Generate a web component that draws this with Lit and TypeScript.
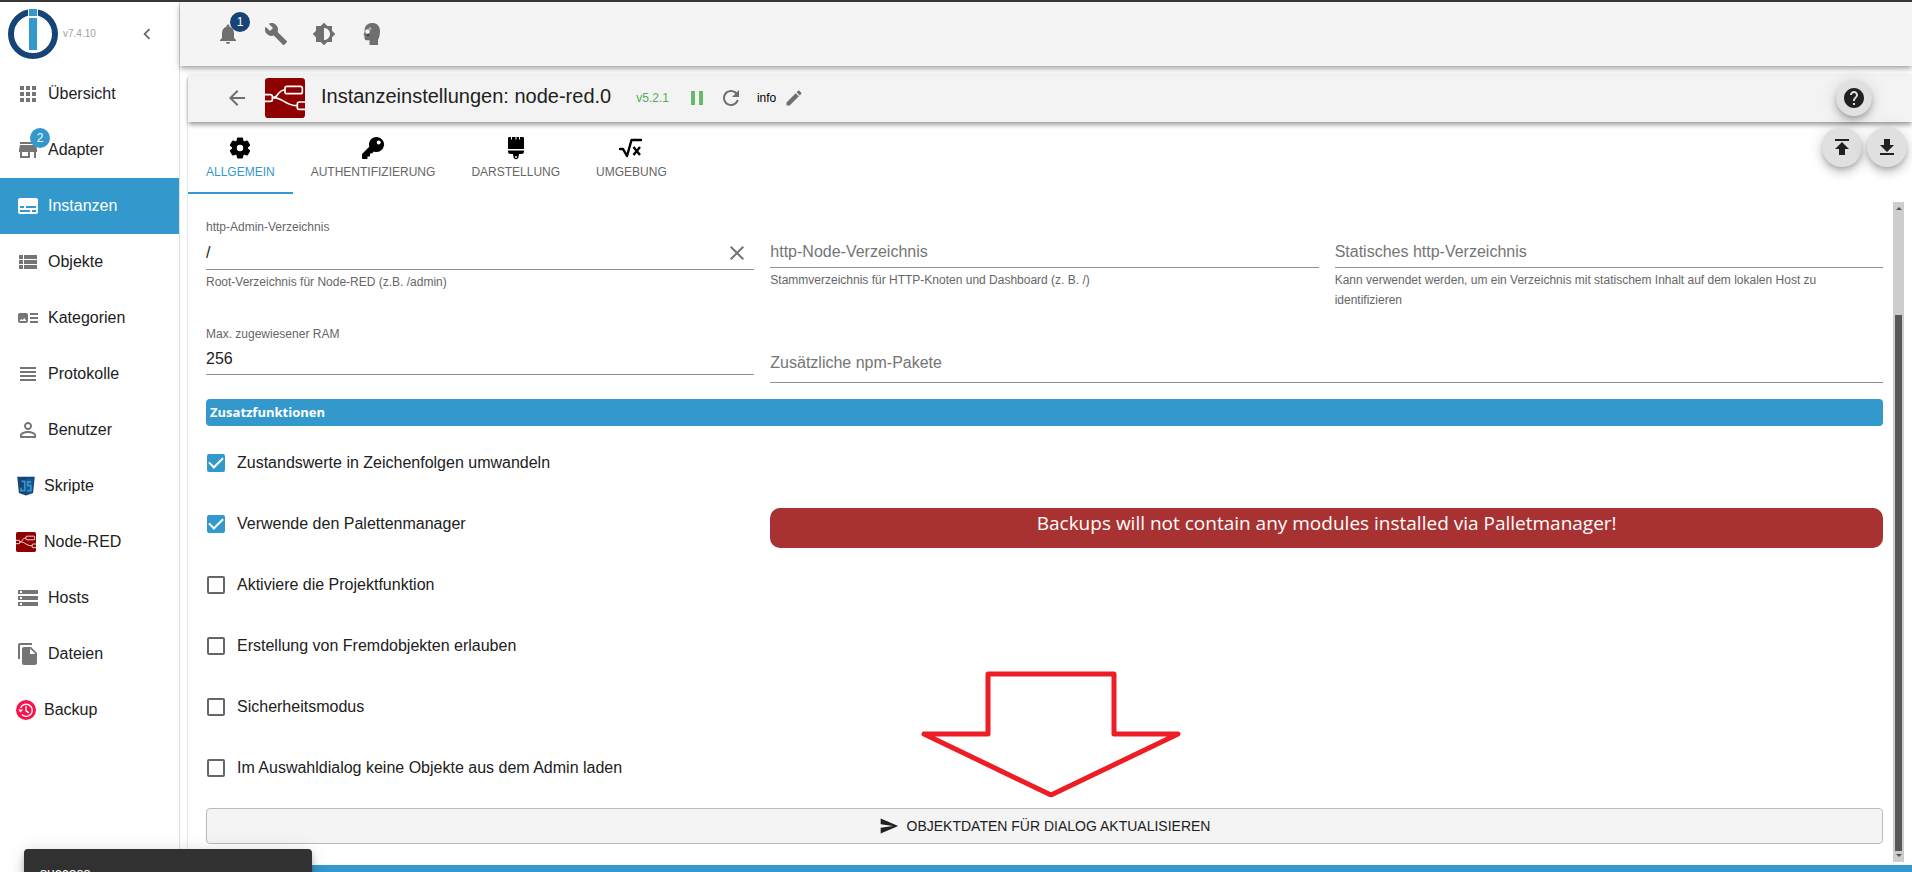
import { LitElement, html, css, svg, nothing, TemplateResult } from "lit";
import { customElement, state } from "lit/decorators.js";

const shapes: Record<string, TemplateResult> = {
  apps: svg`<path d="M4 8h4V4H4v4zm6 12h4v-4h-4v4zm-6 0h4v-4H4v4zm0-6h4v-4H4v4zm6 0h4v-4h-4v4zm6-10v4h4V4h-4zm-6 4h4V4h-4v4zm6 6h4v-4h-4v4zm0 6h4v-4h-4v4z"/>`,
  store: svg`<path d="M20 4H4v2h16V4zm1 10v-2l-1-5H4l-1 5v2h1v6h10v-6h4v6h2v-6h1zm-9 4H6v-4h6v4z"/>`,
  subtitles: svg`<path d="M20 4H4c-1.1 0-2 .9-2 2v12c0 1.100.9 2 2 2h16c1.100 0 2-.9 2-2V6c0-1.100-.9-2-2-2zM4 12h4v2H4v-2zm10 6H4v-2h10v2zm6 0h-4v-2h4v2zm0-4H10v-2h10v2z"/>`,
  viewList: svg`<path d="M3 14h4v-4H3v4zm0 5h4v-4H3v4zM3 9h4V5H3v4zm5 5h13v-4H8v4zm0 5h13v-4H8v4zM8 5v4h13V5H8z"/>`,
  categories: svg`<path d="M22 13h-8v-2h8v2zm0-6h-8v2h8V7zm-8 10h8v-2h-8v2zm-2-8v6c0 1.100-.9 2-2 2H4c-1.100 0-2-.9-2-2V9c0-1.100.9-2 2-2h6c1.100 0 2 .9 2 2zm-1.500 6-2.250-3-1.750 2.260-1.250-1.510L3.500 15h7z"/>`,
  lines: svg`<path d="M4 15h16v-2H4v2zm0 4h16v-2H4v2zm0-8h16V9H4v2zm0-6v2h16V5H4z"/>`,
  person: svg`<path d="M12 5.900a2.100 2.100 0 1 1 0 4.200 2.100 2.100 0 0 1 0-4.200m0 9c2.970 0 6.100 1.460 6.100 2.100v1.100H5.900V17c0-.640 3.130-2.100 6.100-2.100M12 4C9.790 4 8 5.790 8 8s1.790 4 4 4 4-1.790 4-4-1.790-4-4-4zm0 9c-2.670 0-8 1.340-8 4v3h16v-3c0-2.660-5.330-4-8-4z"/>`,
  storage: svg`<path d="M2 20h20v-4H2v4zm2-3h2v2H4v-2zM2 4v4h20V4H2zm4 3H4V5h2v2zm-4 7h20v-4H2v4zm2-3h2v2H4v-2z"/>`,
  files: svg`<path d="M16 1H4c-1.100 0-2 .9-2 2v14h2V3h12V1zm-1 4 6 6v10c0 1.100-.9 2-2 2H7.990C6.890 23 6 22.100 6 21l.01-14c0-1.100.890-2 1.990-2h7zm-1 7h5.500L14 6.500V12z"/>`,
  chevron: svg`<path d="M15.410 7.410 14 6l-6 6 6 6 1.410-1.410L10.830 12z"/>`,
  bell: svg`<path d="M12 22c1.100 0 2-.9 2-2h-4c0 1.100.890 2 2 2zm6-6v-5c0-3.070-1.640-5.640-4.500-6.320V4c0-.830-.670-1.500-1.500-1.500s-1.500.670-1.500 1.500v.680C7.630 5.360 6 7.920 6 11v5l-2 2v1h16v-1l-2-2z"/>`,
  wrench: svg`<path d="m22.700 19-9.100-9.100c.9-2.300.4-5-1.500-6.900-2-2-5-2.400-7.400-1.300L9 6 6 9 1.600 4.700C.4 7.100.9 10.100 2.900 12.100c1.900 1.900 4.600 2.400 6.900 1.500l9.100 9.100c.4.4 1 .4 1.400 0l2.300-2.300c.5-.4.5-1.100.1-1.400z"/>`,
  contrast: svg`<path d="M20 15.310 23.310 12 20 8.690V4h-4.690L12 .690 8.690 4H4v4.690L.690 12 4 15.310V20h4.690L12 23.310 15.310 20H20v-4.690zM12 18V6c3.310 0 6 2.690 6 6s-2.690 6-6 6z"/>`,
  head: svg`<path fill-rule="evenodd" d="M13 1C8.500 1 5.500 3 4.800 6.500L4.500 10l-.8 2.500c-.2.600 0 1 .8 1.200v2.300c0 1.500.8 2.300 2.300 2.300h2.700V23H18v-5c1-2.300 2-5 2-8.500C20 4.600 17.500 1 13 1zM7.500 7.300a2.300 2.300 0 1 1 0 4.600 2.300 2.300 0 0 1 0-4.600z"/><circle cx="10" cy="6.700" r="1.400" fill="#b5b5b5"/><circle cx="8" cy="13" r="1.300" fill="#3f3f3f"/>`,
  back: svg`<path d="M20 11H7.830l5.590-5.590L12 4l-8 8 8 8 1.410-1.410L7.830 13H20v-2z"/>`,
  pause: svg`<path d="M6 19h4V5H6v14zm8-14v14h4V5h-4z"/>`,
  refresh: svg`<path d="M17.650 6.350C16.200 4.900 14.210 4 12 4c-4.420 0-7.990 3.580-7.990 8s3.570 8 7.990 8c3.730 0 6.840-2.550 7.730-6h-2.080c-.820 2.330-3.040 4-5.650 4-3.310 0-6-2.690-6-6s2.690-6 6-6c1.660 0 3.140.690 4.220 1.780L13 11h7V4l-2.350 2.350z"/>`,
  pencil: svg`<path d="M3 17.250V21h3.750L17.810 9.940l-3.750-3.750L3 17.250zM20.710 7.040c.390-.390.390-1.020 0-1.410l-2.340-2.340c-.390-.390-1.020-.390-1.410 0l-1.830 1.830 3.750 3.750 1.830-1.830z"/>`,
  help: svg`<path d="M12 2C6.480 2 2 6.480 2 12s4.480 10 10 10 10-4.480 10-10S17.520 2 12 2zm1 17h-2v-2h2v2zm2.070-7.750-.9.920C13.450 12.900 13 13.500 13 15h-2v-.5c0-1.100.450-2.100 1.170-2.830l1.240-1.260c.370-.360.590-.860.590-1.410 0-1.100-.9-2-2-2s-2 .9-2 2H8c0-2.210 1.790-4 4-4s4 1.790 4 4c0 .880-.360 1.680-.930 2.250z"/>`,
  upload: svg`<path d="M5 4v2h14V4H5zm0 10h4v6h6v-6h4l-7-7-7 7z"/>`,
  download: svg`<path d="M19 10h-4V4H9v6H5l7 7 7-7zM5 18v2h14v-2H5z"/>`,
  gear: svg`<path stroke="currentColor" stroke-width="1.600" stroke-linejoin="round" d="M19.140 12.940c.040-.300.060-.610.060-.940 0-.320-.020-.640-.070-.940l2.030-1.580c.180-.140.230-.410.120-.610l-1.920-3.320c-.120-.220-.370-.290-.590-.220l-2.390.960c-.500-.380-1.030-.700-1.620-.940l-.360-2.540c-.040-.240-.240-.410-.480-.410h-3.840c-.240 0-.430.170-.470.410l-.360 2.540c-.590.240-1.130.570-1.620.940l-2.390-.960c-.220-.080-.470 0-.590.220L2.740 8.870c-.120.210-.080.470.120.610l2.030 1.580c-.050.300-.090.630-.090.940s.020.640.070.940l-2.030 1.580c-.180.140-.230.410-.120.610l1.920 3.320c.120.220.370.290.590.220l2.390-.960c.500.380 1.030.700 1.620.940l.360 2.540c.050.240.240.410.480.410h3.840c.240 0 .440-.170.470-.410l.360-2.540c.590-.240 1.130-.560 1.620-.940l2.390.960c.220.080.470 0 .590-.220l1.920-3.320c.120-.220.070-.470-.120-.610l-2.010-1.580zM12 16a4 4 0 1 1 0-8 4 4 0 0 1 0 8z"/>`,
  key: svg`<path fill-rule="evenodd" d="M15.500 1a7.500 7.500 0 0 0-7.200 9.700L1.500 17.500c-.3.300-.5.700-.5 1.100V22c0 .6.400 1 1 1h3.500c.6 0 1-.4 1-1v-1.500H8c.6 0 1-.4 1-1V17.500h1.500c.4 0 .7-.1.900-.4l1.500-1.600A7.500 7.500 0 1 0 15.500 1zm2.200 3.500a2 2 0 1 1 0 4 2 2 0 0 1 0-4z"/>`,
  brush: svg`<path d="M4 13V2.500C4 1.500 4.500 1 5.500 1H7v2.500h1V1h3.500v2.500h1V1H15v2.500h1V1h2.500c1 0 1.500.5 1.500 1.500V13H4zm0 1.500h16v1c0 1.700-1.100 2.500-3 2.500h-2l-.5 3c-.2 1.400-1.100 2.200-2.500 2.200s-2.300-.8-2.500-2.200L9 18H7c-1.900 0-3-.8-3-2.500v-1zM12 20a1 1 0 1 0 0 2 1 1 0 0 0 0-2z" fill-rule="evenodd"/>`,
  root: svg`<path d="M1 13h3l4 7L12.500 4H22" fill="none" stroke="currentColor" stroke-width="2.400" stroke-linejoin="round" stroke-linecap="round"/><path d="m14.500 11 6.500 8m0-8-6.500 8" fill="none" stroke="currentColor" stroke-width="2.400"/>`,
  clear: svg`<path d="M19 6.410 17.590 5 12 10.590 6.410 5 5 6.410 10.590 12 5 17.590 6.410 19 12 13.410 17.590 19 19 17.590 13.410 12z"/>`,
  send: svg`<path d="M2.010 21 23 12 2.010 3 2 10l15 2-15 2z"/>`,
  nodeRed: svg`<rect width="24" height="24" rx="2" fill="#8f0000"/><g fill="none" stroke="#fff" stroke-width="1"><path d="M0 10h3.200q1.200 0 1.200 1v2q0 1-1.200 1H0M4.400 12C8.500 12 7 7.200 12 7.200M5 11.800C11 11.800 12 16.600 19.400 16.600M24 14.400h-3.400q-1.200 0-1.200 1v2.400q0 1 1.200 1H24"/><rect x="12" y="5" width="10.400" height="4.400" rx="1.200"/></g>`,
  script: svg`<path d="M1.500 1h21l-2 19.500-8.500 3-8.500-3z" fill="#164477"/><path d="M12 3h8.500l-1.500 16L12 21.500z" fill="#1c5590"/><path d="M6.500 6.500h4V17.500H6v-3.500M18 7h-4v4.500h3.800V17.500h-4.300" fill="none" stroke="#3399cc" stroke-width="2"/>`,
  backup: svg`<circle cx="12" cy="12" r="12" fill="#f8124a"/><path d="M5.500 9.500A7.300 7.300 0 1 1 7 17.500M12 7.500V13l3.500 2.500" fill="none" stroke="#fff" stroke-width="1.700"/><path d="M2.500 11.500h6L5.500 15z" fill="#fff"/>`,
};

const icon = (name: string, size = 24) =>
  svg`<svg class="icon" width=${size} height=${size} viewBox="0 0 24 24" fill="currentColor" aria-hidden="true">${shapes[name]}</svg>`;

const base = css`
  :host, * { box-sizing: border-box; }
  .icon { display: block; flex: none; }
  button, input { font: inherit; color: inherit; }
  button { border: 0; padding: 0; background: none; cursor: pointer; display: flex; align-items: center; justify-content: center; }
`;

interface NavEntry { label: string; icon: string; badge?: number; custom?: boolean; }

const entries: NavEntry[] = [
  { label: "Übersicht", icon: "apps" },
  { label: "Adapter", icon: "store", badge: 2 },
  { label: "Instanzen", icon: "subtitles" },
  { label: "Objekte", icon: "viewList" },
  { label: "Kategorien", icon: "categories" },
  { label: "Protokolle", icon: "lines" },
  { label: "Benutzer", icon: "person" },
  { label: "Skripte", icon: "script", custom: true },
  { label: "Node-RED", icon: "nodeRed", custom: true },
  { label: "Hosts", icon: "storage" },
  { label: "Dateien", icon: "files" },
  { label: "Backup", icon: "backup", custom: true },
];

@customElement("admin-nav")
class AdminNav extends LitElement {
  @state() private active = "Instanzen";

  static styles = [base, css`
    :host { display: flex; flex-direction: column; flex: none; width: 180px; border-right: 1px solid #dedede; background: #fff; }
    .head { display: flex; align-items: center; height: 64px; padding: 0 8px; }
    .version { font-size: 10px; color: #a0a0a0; padding-left: 5px; flex: 1; }
    .collapse { width: 48px; height: 48px; color: #6b6b6b; }
    .item { position: relative; display: flex; align-items: center; gap: 8px; height: 56px; padding: 0 16px; color: #212121; text-decoration: none; line-height: 24px; }
    .glyph { position: relative; color: #757575; }
    .active, .active .glyph { background: #3399cc; color: #fff; }
    .badge { position: absolute; top: -10px; right: -10px; width: 20px; height: 20px; border-radius: 10px; background: #3399cc; color: #fff; font-size: 12px; line-height: 20px; text-align: center; }
  `];

  render() {
    return html`
      <div class="head">
        <svg class="icon" width="50" height="50" viewBox="0 0 50 50" role="img" aria-label="ioBroker">
          <circle cx="25" cy="25" r="22" fill="none" stroke="#164477" stroke-width="6"/>
          <path d="M20 0h10v8H20z" fill="#fff"/>
          <path d="M21 0h8v7h-8zM21 9h8v32h-8z" fill="#3399cc"/>
        </svg>
        <span class="version">v7.4.10</span>
        <button class="collapse" aria-label="Menü einklappen">${icon("chevron", 22)}</button>
      </div>
      <nav>
        ${entries.map((e) => html`
          <a class="item ${e.label === this.active ? "active" : ""}" href="#${e.label}" @click=${() => (this.active = e.label)}>
            <span class="glyph">${icon(e.icon, e.custom ? 20 : 24)}${e.badge ? html`<span class="badge">${e.badge}</span>` : nothing}</span>
            <span>${e.label}</span>
          </a>`)}
      </nav>`;
  }
}

@customElement("text-field")
class TextField extends LitElement {
  static properties = {
    label: {}, value: {}, helper: {}, clearable: { type: Boolean }, tall: { type: Boolean },
  };
  declare label: string;
  declare value: string;
  declare helper: string;
  declare clearable: boolean;
  declare tall: boolean;

  static styles = [base, css`
    :host { display: block; min-width: 0; }
    .label { display: block; font-size: 12px; line-height: 16px; color: #666; }
    .row { display: flex; align-items: center; height: 33px; padding-top: 1px; border-bottom: 1px solid #8f8f8f; }
    .row.clearable { height: 35px; }
    .row.tall { height: 41px; }
    .input { flex: 1; min-width: 0; height: 24px; border: 0; outline: 0; padding: 0; background: none; color: #212121; }
    .input::placeholder { color: #757575; opacity: 1; }
    .clear { width: 34px; height: 34px; color: #757575; }
    .helper { margin: 2px 0 0; font-size: 12px; line-height: 20px; color: #666; }
  `];

  render() {
    const filled = !!this.value;
    return html`
      <label class="label" for="box">${filled ? this.label : html`&nbsp;`}</label>
      <div class="row ${this.clearable ? "clearable" : ""} ${this.tall ? "tall" : ""}">
        <input class="input" id="box" aria-label=${this.label} .value=${this.value ?? ""} placeholder=${filled ? "" : this.label}>
        ${this.clearable ? html`<button class="clear" aria-label="Leeren">${icon("clear")}</button>` : nothing}
      </div>
      ${this.helper ? html`<p class="helper">${this.helper}</p>` : nothing}`;
  }
}

const options = [
  { label: "Zustandswerte in Zeichenfolgen umwandeln", on: true },
  { label: "Verwende den Palettenmanager", on: true, warning: "Backups will not contain any modules installed via Palletmanager!" },
  { label: "Aktiviere die Projektfunktion", on: false },
  { label: "Erstellung von Fremdobjekten erlauben", on: false },
  { label: "Sicherheitsmodus", on: false },
  { label: "Im Auswahldialog keine Objekte aus dem Admin laden", on: false },
];

@customElement("instance-form")
class InstanceForm extends LitElement {
  static styles = [base, css`
    :host { display: flex; flex: 1; min-height: 0; padding-right: 8px; }
    .scroll { flex: 1; min-width: 0; overflow: hidden; padding: 17px 10px 0 18px; }
    .grid { display: grid; grid-template-columns: repeat(3, minmax(0, 1fr)); column-gap: 16px; }
    .row-one { height: 107px; }
    .row-two { height: 73px; }
    .wide { grid-column: span 2; }
    .section { margin: 0; padding: 0 4px; border-radius: 4px; background: #3399cc; color: #fff; font: bold 13px/27px "Open Sans", sans-serif; }
    .options { padding-top: 6px; }
    .option { align-items: center; height: 61px; }
    .check { display: flex; align-items: center; gap: 12px; color: #212121; line-height: 24px; cursor: pointer; }
    .tick { appearance: none; flex: none; width: 18px; height: 18px; margin: 0 0 0 1px; border: 2px solid #666; border-radius: 2px; display: grid; place-items: center; }
    .tick:checked { border-color: #3399cc; background: #3399cc; }
    .tick:checked::after { content: ""; width: 12px; height: 6px; border: solid #fff; border-width: 0 0 2px 2px; transform: translateY(-2px) rotate(-45deg); }
    .warning { height: 40px; margin: 8px 0 0; border-radius: 10px; background: #a83232; color: #fff; font: 19px/30px "Open Sans", sans-serif; text-align: center; }
    .action { position: relative; margin-top: 10px; }
    .refresh { width: 100%; height: 36px; gap: 8px; border: 1px solid #bbb; border-radius: 4px; background: #f4f4f4; color: #212121; font-size: 14px; text-transform: uppercase; }
    .pointer { position: absolute; bottom: 100%; left: calc(50% - 124px); margin-bottom: 11px; pointer-events: none; }
    .bar { flex: none; display: flex; flex-direction: column; align-items: center; width: 11px; padding: 5px 0; background: #cdcdcd; }
    .up, .down { width: 0; height: 0; border: solid transparent; border-width: 0 3px; }
    .up { border-bottom: 3px solid #555; }
    .down { border-top: 3px solid #555; margin-top: 3px; }
    .rest { flex: 105; }
    .thumb { flex: 536; width: 7px; background: #585858; }
  `];

  render() {
    return html`
      <div class="scroll">
        <div class="grid row-one">
          <text-field label="http-Admin-Verzeichnis" value="/" clearable helper="Root-Verzeichnis für Node-RED (z.B. /admin)"></text-field>
          <text-field label="http-Node-Verzeichnis" helper="Stammverzeichnis für HTTP-Knoten und Dashboard (z. B. /)"></text-field>
          <text-field label="Statisches http-Verzeichnis" helper="Kann verwendet werden, um ein Verzeichnis mit statischem Inhalt auf dem lokalen Host zu identifizieren"></text-field>
        </div>
        <div class="grid row-two">
          <text-field label="Max. zugewiesener RAM" value="256"></text-field>
          <text-field class="wide" tall label="Zusätzliche npm-Pakete"></text-field>
        </div>
        <h2 class="section">Zusatzfunktionen</h2>
        <div class="options">
          ${options.map((o) => html`
            <div class="grid option">
              <label class="check"><input class="tick" type="checkbox" .checked=${o.on}>${o.label}</label>
              ${o.warning ? html`<p class="warning wide">${o.warning}</p>` : nothing}
            </div>`)}
        </div>
        <div class="action">
          <svg class="pointer" width="260" height="126" viewBox="0 0 260 126" aria-hidden="true">
            <path d="M67 3h126v60h64L130 124 3 63h64z" fill="none" stroke="#ee1c24" stroke-width="5" stroke-linejoin="round"/>
          </svg>
          <button class="refresh">${icon("send", 20)}<span>Objektdaten für Dialog aktualisieren</span></button>
        </div>
      </div>
      <div class="bar"><span class="up"></span><span class="rest"></span><span class="thumb"></span><span class="down"></span></div>`;
  }
}

const tabs = [
  { label: "Allgemein", icon: "gear" },
  { label: "Authentifizierung", icon: "key" },
  { label: "Darstellung", icon: "brush" },
  { label: "Umgebung", icon: "root" },
];

@customElement("app-root")
class AppRoot extends LitElement {
  @state() private tab = "Allgemein";

  static styles = [base, css`
    :host { display: flex; position: relative; height: 100vh; overflow: hidden; border-top: 2px solid #3a3637; background: #fff; color: #212121; font: 16px/24px "Liberation Sans", Arial, sans-serif; }
    .main { flex: 1; min-width: 0; display: flex; flex-direction: column; }
    .toolbar { flex: none; display: flex; align-items: center; height: 64px; padding: 0 24px; margin-bottom: 8px; background: #f4f4f4; box-shadow: 0 2px 4px -1px rgba(0,0,0,.2), 0 4px 5px rgba(0,0,0,.14), 0 1px 10px rgba(0,0,0,.12); position: relative; }
    .tool { position: relative; width: 48px; height: 48px; color: #6f6f6f; }
    .badge { position: absolute; top: 2px; right: 2px; width: 20px; height: 20px; border-radius: 10px; background: #164477; color: #fff; font-size: 12px; line-height: 20px; }
    .paper { flex: 1; min-height: 0; display: flex; flex-direction: column; margin-left: 8px; border-radius: 4px; background: #fff; box-shadow: 0 1px 2px rgba(0,0,0,.3); }
    .header { flex: none; display: flex; align-items: center; height: 48px; padding: 0 40px 0 25px; border-radius: 4px 4px 0 0; background: #f3f3f3; box-shadow: 0 3px 4px -1px rgba(0,0,0,.3), 0 4px 5px rgba(0,0,0,.14); }
    .back { width: 48px; height: 48px; color: #6f6f6f; }
    .logo { margin: 0 16px 0 4px; }
    .title { margin: 0 25px 4px 0; font-size: 20px; line-height: 32px; font-weight: 400; }
    .release { font-size: 12px; color: #4caf50; margin-right: 16px; }
    .play { width: 24px; height: 24px; color: #66bb6a; }
    .reload { width: 24px; height: 24px; margin: 0 14px 0 10px; color: #6f6f6f; }
    .level { font-size: 12px; color: #000; margin-right: 8px; }
    .edit { color: #6f6f6f; }
    .fab { border-radius: 50%; background: #e0e0e0; color: #212121; width: 40px; height: 40px; box-shadow: 0 3px 5px -1px rgba(0,0,0,.2), 0 6px 10px rgba(0,0,0,.14), 0 1px 18px rgba(0,0,0,.12); }
    .help { width: 36px; height: 36px; margin-left: auto; }
    .tabs { flex: none; display: flex; height: 72px; margin-bottom: 8px; }
    .tab { flex-direction: column; padding: 5px 18px 0; border-bottom: 2px solid transparent; color: #666; font-size: 12px; text-transform: uppercase; }
    .tab .icon { color: #000; }
    .selected { color: #3399cc; border-color: #3399cc; }
    .transfer { display: flex; gap: 5px; margin: 5px 5px 0 auto; }
    .footer { flex: none; height: 7px; margin-top: 3px; background: #3399cc; }
    .snack { position: absolute; left: 24px; top: calc(100% - 23px); width: 288px; padding: 14px 16px; border-radius: 4px; background: #313131; color: #fff; font-size: 14px; line-height: 20px; box-shadow: 0 3px 5px -1px rgba(0,0,0,.2), 0 6px 10px rgba(0,0,0,.14), 0 1px 18px rgba(0,0,0,.12); }
  `];

  render() {
    return html`
      <admin-nav></admin-nav>
      <div class="main">
        <header class="toolbar">
          <button class="tool" aria-label="Benachrichtigungen">${icon("bell")}<span class="badge">1</span></button>
          <button class="tool" aria-label="Einstellungen">${icon("wrench")}</button>
          <button class="tool" aria-label="Farbschema">${icon("contrast")}</button>
          <button class="tool" aria-label="Expertenmodus">${icon("head")}</button>
        </header>
        <main class="paper">
          <div class="header">
            <button class="back" aria-label="Zurück">${icon("back")}</button>
            <span class="logo">${icon("nodeRed", 40)}</span>
            <h1 class="title">Instanzeinstellungen: node-red.0</h1>
            <span class="release">v5.2.1</span>
            <button class="play" aria-label="Pause">${icon("pause")}</button>
            <button class="reload" aria-label="Neu starten">${icon("refresh")}</button>
            <span class="level">info</span>
            <button class="edit" aria-label="Bearbeiten">${icon("pencil", 20)}</button>
            <button class="fab help" aria-label="Hilfe">${icon("help")}</button>
          </div>
          <div class="tabs">
            ${tabs.map((t) => html`
              <button class="tab ${t.label === this.tab ? "selected" : ""}" @click=${() => (this.tab = t.label)}>${icon(t.icon)}<span>${t.label}</span></button>`)}
            <div class="transfer">
              <button class="fab" aria-label="Importieren">${icon("upload")}</button>
              <button class="fab" aria-label="Exportieren">${icon("download")}</button>
            </div>
          </div>
          <instance-form></instance-form>
          <div class="footer"></div>
        </main>
      </div>
      <div class="snack" role="status">success</div>`;
  }
}
